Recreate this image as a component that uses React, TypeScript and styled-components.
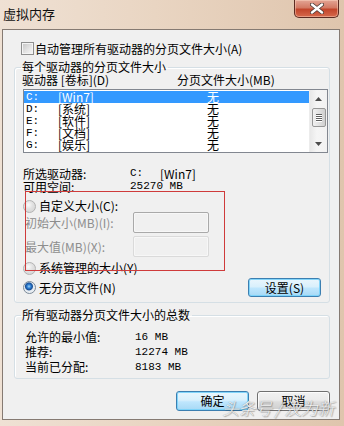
import styled, { createGlobalStyle } from "styled-components";

const GlobalStyle = createGlobalStyle`
  html, body {
    margin: 0;
    padding: 0;
  }
  body {
    background: #e6d1bd;
    font-family: "Noto Sans CJK SC", "Noto Sans", sans-serif;
    font-size: 12px;
    color: #000;
  }
`;

interface Drive {
  letter: string;
  label: string;
  size: string;
}

const drives: Drive[] = [
  { letter: "C:", label: "[Win7]", size: "无" },
  { letter: "D:", label: "[系统]", size: "无" },
  { letter: "E:", label: "[软件]", size: "无" },
  { letter: "F:", label: "[文档]", size: "无" },
  { letter: "G:", label: "[娱乐]", size: "无" },
];

const totals = [
  { label: "允许的最小值:", value: "16 MB" },
  { label: "推荐:", value: "12274 MB" },
  { label: "当前已分配:", value: "8183 MB" },
];

export default function App() {
  return (
    <SC_Window>
      <GlobalStyle />
      <SC_TitleBar>
        <SC_Title>虚拟内存</SC_Title>
        <SC_CloseButton>
          <svg width="14" height="11" viewBox="0 0 14 11">
            <path
              d="M2 1.5 L12 9.5 M12 1.5 L2 9.5"
              stroke="#4a3a36"
              strokeWidth="4"
              strokeLinecap="round"
            />
            <path
              d="M2 1.5 L12 9.5 M12 1.5 L2 9.5"
              stroke="#ffffff"
              strokeWidth="2.4"
              strokeLinecap="round"
            />
          </svg>
        </SC_CloseButton>
      </SC_TitleBar>

      <SC_Body>
        <SC_CheckRow>
          <SC_CheckBox />
          <span>自动管理所有驱动器的分页文件大小(A)</span>
        </SC_CheckRow>

        <SC_Group $top={6}>
          <SC_GroupTitle>每个驱动器的分页文件大小</SC_GroupTitle>
          <SC_ListHeader>
            <SC_HeaderCol $width={155}>驱动器 [卷标](D)</SC_HeaderCol>
            <SC_HeaderCol>分页文件大小(MB)</SC_HeaderCol>
          </SC_ListHeader>

          <SC_ListBox>
            <SC_ListRows>
              {drives.map((d, i) => (
                <SC_ListRow key={d.letter} $selected={i === 0}>
                  <SC_Mono $width={32}>{d.letter}</SC_Mono>
                  <SC_Cell $width={149}>{d.label}</SC_Cell>
                  <SC_Cell>{d.size}</SC_Cell>
                </SC_ListRow>
              ))}
            </SC_ListRows>
            <SC_ScrollBar>
              <SC_ScrollArrow>
                <svg width="7" height="4" viewBox="0 0 7 4">
                  <path d="M0 4 L3.5 0 L7 4 Z" fill="#4d4d4d" />
                </svg>
              </SC_ScrollArrow>
              <SC_Track>
                <SC_Thumb>
                  <SC_Grip />
                  <SC_Grip />
                  <SC_Grip />
                  <SC_Grip />
                </SC_Thumb>
              </SC_Track>
              <SC_ScrollArrow>
                <svg width="7" height="4" viewBox="0 0 7 4">
                  <path d="M0 0 L7 0 L3.5 4 Z" fill="#4d4d4d" />
                </svg>
              </SC_ScrollArrow>
            </SC_ScrollBar>
          </SC_ListBox>

          <SC_InfoBlock>
            <SC_InfoRow>
              <SC_InfoLabel $width={107}>所选驱动器:</SC_InfoLabel>
              <SC_Mono $width={30}>C:</SC_Mono>
              <span>[Win7]</span>
            </SC_InfoRow>
            <SC_InfoRow>
              <SC_InfoLabel $width={107}>可用空间:</SC_InfoLabel>
              <SC_Mono>25270 MB</SC_Mono>
            </SC_InfoRow>
          </SC_InfoBlock>

          <SC_RadioRow $top={7}>
            <SC_Radio />
            <span>自定义大小(C):</span>
          </SC_RadioRow>
          <SC_FieldRow $top={0}>
            <SC_FieldLabel>初始大小(MB)(I):</SC_FieldLabel>
            <SC_TextBox $tone="#a9a9a9" />
          </SC_FieldRow>
          <SC_FieldRow $top={3}>
            <SC_FieldLabel>最大值(MB)(X):</SC_FieldLabel>
            <SC_TextBox $tone="#dadada" />
          </SC_FieldRow>
          <SC_RadioRow $top={5}>
            <SC_Radio />
            <span>系统管理的大小(Y)</span>
          </SC_RadioRow>
          <SC_ActionRow>
            <SC_RadioRow $top={0}>
              <SC_Radio $checked />
              <span>无分页文件(N)</span>
            </SC_RadioRow>
            <SC_Button $primary>设置(S)</SC_Button>
          </SC_ActionRow>
        </SC_Group>

        <SC_Group $top={6}>
          <SC_GroupTitle>所有驱动器分页文件大小的总数</SC_GroupTitle>
          <SC_Totals>
            {totals.map((t) => (
              <SC_TotalRow key={t.label}>
                <SC_InfoLabel $width={110}>{t.label}</SC_InfoLabel>
                <SC_Mono>{t.value}</SC_Mono>
              </SC_TotalRow>
            ))}
          </SC_Totals>
        </SC_Group>

        <SC_ButtonBar>
          <SC_Button $primary>确定</SC_Button>
          <SC_Button>取消</SC_Button>
        </SC_ButtonBar>
      </SC_Body>

      <SC_Annotation />
      <SC_Watermark>头条号 / 汶为新</SC_Watermark>
    </SC_Window>
  );
}

const SC_Window = styled.div`
  position: relative;
  width: 344px;
  height: 426px;
  box-sizing: border-box;
  display: flex;
  flex-direction: column;
  padding: 0 4px 6px 2px;
  background: linear-gradient(
    to right,
    #efe1d4 0%,
    #e9d5c2 45%,
    #dfc5ad 100%
  );
  overflow: hidden;
`;

const SC_TitleBar = styled.div`
  height: 29px;
  display: flex;
  justify-content: space-between;
  align-items: flex-start;
  flex-shrink: 0;
`;

const SC_Title = styled.div`
  padding: 7px 0 0 1px;
  font-size: 13px;
  line-height: 14px;
  color: #111;
`;

const SC_CloseButton = styled.div`
  width: 45px;
  height: 18px;
  box-sizing: border-box;
  margin-right: 1px;
  display: flex;
  align-items: center;
  justify-content: center;
  border: 1px solid #5c2b22;
  border-top: none;
  border-radius: 0 0 5px 5px;
  background: linear-gradient(
    to bottom,
    #e3a595 0%,
    #d37a64 45%,
    #c2452b 55%,
    #d6694c 100%
  );
  box-shadow: inset 0 0 0 1px rgba(255, 220, 200, 0.45);
`;

const SC_Body = styled.div`
  flex: 1;
  box-sizing: border-box;
  border: 1px solid #857a72;
  background: #f0f0f0;
  padding: 0 9px 0 11px;
  display: flex;
  flex-direction: column;
`;

const SC_CheckRow = styled.div`
  margin-top: 12px;
  padding-left: 7px;
  height: 13px;
  display: flex;
  align-items: center;
  gap: 1px;
  line-height: 13px;
`;

const SC_CheckBox = styled.div`
  width: 13px;
  height: 13px;
  box-sizing: border-box;
  border: 1px solid #8e8f8f;
  background: linear-gradient(135deg, #c4c4c4 0%, #e6e6e6 60%, #f8f8f8 100%);
  box-shadow: inset 0 0 0 1px #f4f4f4;
  flex-shrink: 0;
`;

const SC_Group = styled.fieldset<{ $top: number }>`
  margin: ${(p) => p.$top}px 0 0 0;
  width: 316px;
  box-sizing: border-box;
  padding: 0 0 5px 0;
  border: 1px solid #d5dfe5;
  border-radius: 3px;
  box-shadow: inset 1px 1px 0 #ffffff;
  min-inline-size: 0;
`;

const SC_GroupTitle = styled.legend`
  margin-left: 6px;
  padding: 0 2px 0 1px;
  line-height: 12px;
  height: 12px;
`;

const SC_ListHeader = styled.div`
  margin-top: 1px;
  padding-left: 7px;
  display: flex;
  line-height: 12px;
  height: 12px;
`;

const SC_HeaderCol = styled.div<{ $width?: number }>`
  width: ${(p) => (p.$width ? `${p.$width}px` : "auto")};
  white-space: nowrap;
`;

const SC_ListBox = styled.div`
  margin: 3px 0 0 8px;
  width: 305px;
  height: 64px;
  box-sizing: border-box;
  border: 1px solid #828790;
  background: #ffffff;
  display: flex;
`;

const SC_ListRows = styled.div`
  flex: 1;
  padding-top: 1px;
  display: flex;
  flex-direction: column;
`;

const SC_ListRow = styled.div<{ $selected?: boolean }>`
  height: 12px;
  line-height: 12px;
  display: flex;
  padding-left: 2px;
  background: ${(p) => (p.$selected ? "#3399ff" : "transparent")};
  color: ${(p) => (p.$selected ? "#ffffff" : "#000000")};
`;

const SC_Cell = styled.div<{ $width?: number }>`
  width: ${(p) => (p.$width ? `${p.$width}px` : "auto")};
  white-space: nowrap;
`;

const SC_Mono = styled.span<{ $width?: number }>`
  display: inline-block;
  width: ${(p) => (p.$width ? `${p.$width}px` : "auto")};
  font-family: "Liberation Mono", "DejaVu Sans Mono", monospace;
  font-size: 11px;
  white-space: pre;
`;

const SC_ScrollBar = styled.div`
  width: 17px;
  display: flex;
  flex-direction: column;
  background: linear-gradient(to right, #e8e8e8, #f5f5f5 40%, #f2f2f2);
  border-left: 1px solid #ececec;
`;

const SC_ScrollArrow = styled.div`
  height: 17px;
  display: flex;
  align-items: center;
  justify-content: center;
`;

const SC_Track = styled.div`
  flex: 1;
  display: flex;
  align-items: flex-start;
  justify-content: center;
`;

const SC_Thumb = styled.div`
  margin-top: 1px;
  width: 14px;
  height: 19px;
  box-sizing: border-box;
  border: 1px solid #979797;
  border-radius: 2px;
  background: linear-gradient(to right, #f1f1f1, #e2e2e2 50%, #cfcfcf);
  display: flex;
  flex-direction: column;
  align-items: center;
  justify-content: center;
  gap: 1px;
`;

const SC_Grip = styled.div`
  width: 6px;
  height: 1px;
  background: #5f5f5f;
  box-shadow: 0 1px 0 #ffffff;
`;

const SC_InfoBlock = styled.div`
  margin-top: 14px;
  padding-left: 8px;
  display: flex;
  flex-direction: column;
`;

const SC_InfoRow = styled.div`
  height: 13px;
  line-height: 13px;
  display: flex;
  align-items: center;
  white-space: nowrap;
`;

const SC_InfoLabel = styled.span<{ $width: number }>`
  display: inline-block;
  width: ${(p) => p.$width}px;
`;

const SC_RadioRow = styled.div<{ $top: number }>`
  margin-top: ${(p) => p.$top}px;
  padding-left: 8px;
  height: 12px;
  line-height: 12px;
  display: flex;
  align-items: center;
  gap: 3px;
  white-space: nowrap;
`;

const SC_Radio = styled.div<{ $checked?: boolean }>`
  width: 13px;
  height: 13px;
  box-sizing: border-box;
  border-radius: 50%;
  border: 1px solid ${(p) => (p.$checked ? "#7b8a99" : "#b3b3b3")};
  flex-shrink: 0;
  background: ${(p) =>
    p.$checked
      ? "radial-gradient(circle at 45% 40%, #9cd3f7 0, #2b7bd0 2px, #1a4f94 3.5px, #e4eaf0 4.5px, #f6f6f6 100%)"
      : "radial-gradient(circle at 40% 35%, #fafafa 0, #e2e2e2 4px, #d0d0d0 100%)"};
`;

const SC_FieldRow = styled.div<{ $top: number }>`
  margin-top: ${(p) => p.$top}px;
  padding-left: 10px;
  height: 21px;
  display: flex;
  align-items: center;
  color: #8d8d8d;
  white-space: nowrap;
`;

const SC_FieldLabel = styled.span`
  width: 108px;
  line-height: 12px;
`;

const SC_TextBox = styled.div<{ $tone: string }>`
  width: 76px;
  height: 21px;
  box-sizing: border-box;
  border: 1px solid ${(p) => p.$tone};
  border-radius: 2px;
  background: #f0f0f0;
  box-shadow: inset 0 0 0 1px #f7f7f7;
`;

const SC_ActionRow = styled.div`
  margin-top: 4px;
  height: 19px;
  padding-right: 8px;
  display: flex;
  align-items: center;
  justify-content: space-between;
`;

const SC_Button = styled.div<{ $primary?: boolean }>`
  width: 73px;
  height: 19px;
  box-sizing: border-box;
  display: flex;
  align-items: center;
  justify-content: center;
  line-height: 12px;
  border-radius: 3px;
  border: 1px solid ${(p) => (p.$primary ? "#3c7fb1" : "#707070")};
  background: ${(p) =>
    p.$primary
      ? "linear-gradient(to bottom, #eaf6fd 0%, #d9f0fc 45%, #bee6fd 55%, #a7d9f5 100%)"
      : "linear-gradient(to bottom, #f2f2f2 0%, #ebebeb 45%, #dddddd 55%, #cfcfcf 100%)"};
  box-shadow: inset 0 0 0 1px
    ${(p) => (p.$primary ? "rgba(120, 210, 250, 0.9)" : "rgba(255, 255, 255, 0.8)")};
`;

const SC_Totals = styled.div`
  margin-top: 10px;
  padding-left: 10px;
  display: flex;
  flex-direction: column;
  gap: 3px;
`;

const SC_TotalRow = styled.div`
  height: 12px;
  line-height: 12px;
  display: flex;
  align-items: center;
  white-space: nowrap;
`;

const SC_ButtonBar = styled.div`
  margin-top: 12px;
  display: flex;
  justify-content: flex-end;
  gap: 8px;
  padding-right: 0;
  height: 20px;
  & > div {
    height: 20px;
  }
`;

const SC_Annotation = styled.div`
  position: absolute;
  left: 25px;
  top: 191px;
  width: 200px;
  height: 80px;
  box-sizing: border-box;
  border: 1px solid #cf3b3b;
  pointer-events: none;
`;

const SC_Watermark = styled.div`
  position: absolute;
  left: 222px;
  top: 398px;
  font-size: 17px;
  line-height: 20px;
  font-weight: 300;
  font-style: italic;
  letter-spacing: -0.5px;
  color: rgba(255, 255, 255, 0.92);
  text-shadow: 0 0 1px #777777, 1px 1px 1px rgba(0, 0, 0, 0.3);
  white-space: nowrap;
  pointer-events: none;
`;
